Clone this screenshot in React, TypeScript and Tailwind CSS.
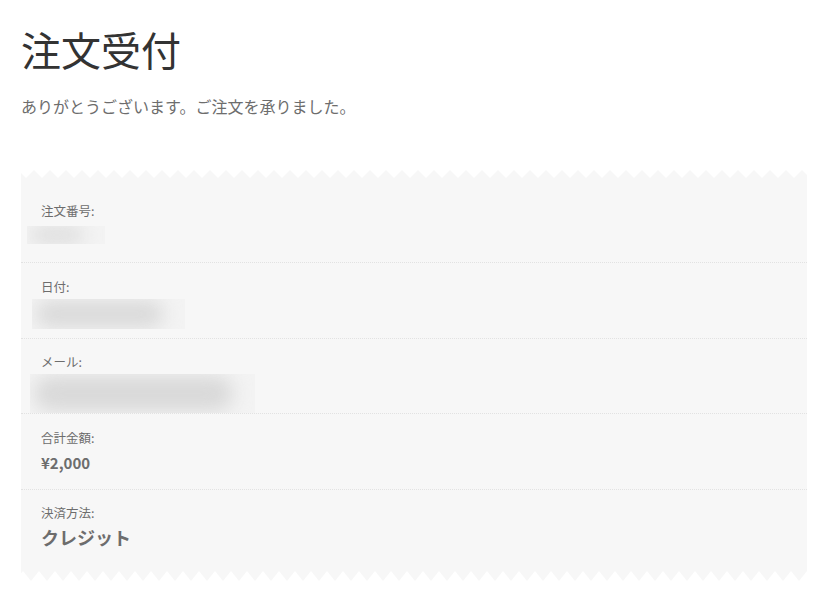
import React from "react";

function Blur({ w, h }: { w: number; h: number }) {
  return (
    <div
      className="relative overflow-hidden bg-[#f3f3f3]"
      style={{ width: w, height: h }}
    >
      <div className="absolute inset-y-[2px] left-[4px] right-[22px] rounded-full bg-[#d9d9d9] blur-[9px]" />
    </div>
  );
}

function ZigTop() {
  return (
    <svg className="block w-full h-[8px]" preserveAspectRatio="none">
      <defs>
        <pattern id="zt" width="16" height="8" patternUnits="userSpaceOnUse" x="5">
          <path d="M0 8 L8 0 L16 8 Z" fill="#f7f7f7" />
        </pattern>
      </defs>
      <rect width="100%" height="8" fill="url(#zt)" />
    </svg>
  );
}

function ZigBottom() {
  return (
    <svg className="block w-full h-[10px]" preserveAspectRatio="none">
      <defs>
        <pattern id="zb" width="16" height="10" patternUnits="userSpaceOnUse" x="2">
          <path d="M0 0 L16 0 L8 10 Z" fill="#f7f7f7" />
        </pattern>
      </defs>
      <rect width="100%" height="10" fill="url(#zb)" />
    </svg>
  );
}

export default function App() {
  const font = { fontFamily: '"Noto Sans CJK JP", "Noto Sans", sans-serif' };
  return (
    <div className="min-h-[606px] bg-white px-[21px] pt-[25px]" style={font}>
      <h1 className="text-[40px] leading-[48px] text-[#333333] font-normal">注文受付</h1>
      <p className="mt-[21px] text-[16px] leading-[24px] text-[#6d6d6d]">
        ありがとうございます。ご注文を承りました。
      </p>
      <div className="mt-[52px] w-[786px]">
        <ZigTop />
        <div className="bg-[#f7f7f7] pt-[9px]">
          <div className="h-[76px] border-b border-dotted border-[#e2e2e2] px-[6px] pt-[16px]">
            <div className="pl-[14px] text-[12.5px] leading-[16px] text-[#6d6d6d]">注文番号:</div>
            <div className="mt-[7px]">
              <Blur w={78} h={18} />
            </div>
          </div>
          <div className="h-[76px] border-b border-dotted border-[#e2e2e2] px-[11px] pt-[16px]">
            <div className="pl-[9px] text-[12.5px] leading-[16px] text-[#6d6d6d]">日付:</div>
            <div className="mt-[4px]">
              <Blur w={153} h={30} />
            </div>
          </div>
          <div className="h-[75px] border-b border-dotted border-[#e2e2e2] px-[9px] pt-[15px]">
            <div className="pl-[11px] text-[12.5px] leading-[16px] text-[#6d6d6d]">メール:</div>
            <div className="mt-[4px]">
              <Blur w={225} h={39} />
            </div>
          </div>
          <div className="h-[76px] border-b border-dotted border-[#e2e2e2] px-[20px] pt-[16px]">
            <div className="text-[12.5px] leading-[16px] text-[#6d6d6d]">合計金額:</div>
            <div className="mt-[6px] text-[15px] leading-[22px] font-bold text-[#6d6d6d]">¥2,000</div>
          </div>
          <div className="h-[81px] px-[20px] pt-[15px]">
            <div className="text-[12.5px] leading-[16px] text-[#6d6d6d]">決済方法:</div>
            <div className="mt-[3px] text-[18px] leading-[26px] font-bold text-[#6d6d6d]">クレジット</div>
          </div>
        </div>
        <ZigBottom />
      </div>
    </div>
  );
}
